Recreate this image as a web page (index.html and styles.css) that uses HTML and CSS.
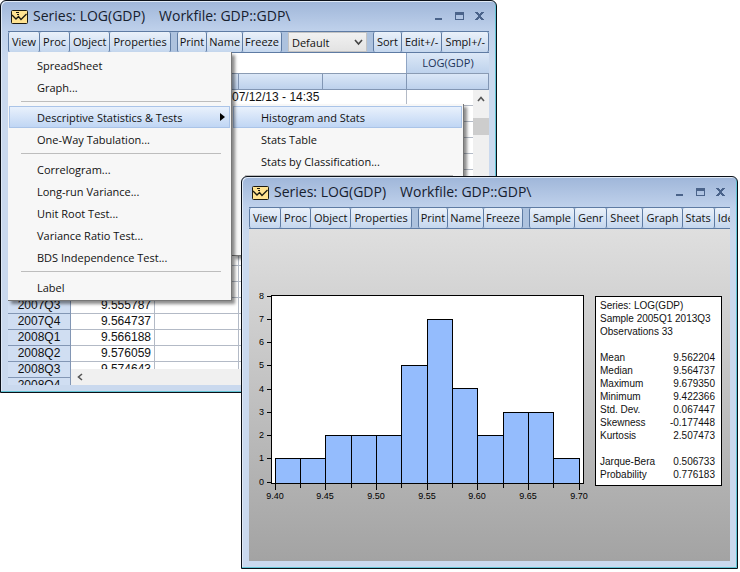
FILE: index.html
```html
<!DOCTYPE html>
<html lang="en">
<head>
<meta charset="utf-8">
<title>Series: LOG(GDP)</title>
<link rel="stylesheet" href="styles.css">
</head>
<body>
<main class="desktop">
  <section class="window window-sheet">
    <header class="titlebar">
      <svg class="app-icon" viewBox="0 0 18 15" aria-hidden="true"><rect x="1.5" y="1.5" width="16" height="13" rx="1" fill="#ffe391" stroke="#1c1a10"/><path d="M2 6l4 4 2.500-2.500L11 10.500l5.500-5.500" fill="none" stroke="#1c1a10" stroke-width="1.300"/><path d="M6 3.500h3M7 5.500h2" stroke="#1c1a10"/></svg>
      <h1 class="title"><span>Series: LOG(GDP)</span><span>Workfile: GDP::GDP\</span></h1>
      <div class="controls">
        <button type="button" aria-label="Minimize"><svg viewBox="0 0 10 10"><path d="M1 7h7v2h-7z"/></svg></button>
        <button type="button" aria-label="Maximize"><svg viewBox="0 0 10 10"><path fill-rule="evenodd" d="M1 1h9v8h-9zM2 4v4h7v-4z"/></svg></button>
        <button type="button" aria-label="Close"><svg viewBox="0 0 10 10"><path d="M1 1h3l1.500 2 1.500-2h3l-3 4 3 4h-3l-1.500-2-1.500 2h-3l3-4z"/></svg></button>
      </div>
    </header>
    <nav class="toolbar">
      <div class="group"><button type="button">View</button><button type="button">Proc</button><button type="button">Object</button><button type="button">Properties</button></div>
      <div class="group tight"><button type="button">Print</button><button type="button">Name</button><button type="button">Freeze</button></div>
      <div class="picker">
        <select aria-label="Display mode"><option>Default</option></select>
        <svg viewBox="0 0 9 7" aria-hidden="true"><path d="M1 1l3.500 4 3.500-4" fill="none" stroke="#444" stroke-width="1.600"/></svg>
      </div>
      <div class="group"><button type="button">Sort</button><button type="button">Edit+/-</button><button type="button">Smpl+/-</button></div>
    </nav>
    <div class="sheet">
      <div class="entry"><input type="text" aria-label="Cell value"><div class="series-name">LOG(GDP)</div></div>
      <div class="grid">
        <table>
          <colgroup><col class="col-label"><col class="col-data"><col class="col-data"><col class="col-data"><col class="col-data"><col></colgroup>
          <thead><tr><th></th><th></th><th></th><th></th><th></th><th></th></tr></thead>
          <tbody>
            <tr><th></th><td></td><td colspan="3" class="updated">07/12/13 - 14:35</td><td></td></tr>
            <tr><th></th><td></td><td></td><td></td><td></td><td></td></tr>
            <tr><th></th><td></td><td></td><td></td><td></td><td></td></tr>
            <tr><th></th><td></td><td></td><td></td><td></td><td></td></tr>
            <tr><th></th><td></td><td></td><td></td><td></td><td></td></tr>
            <tr><th></th><td></td><td></td><td></td><td></td><td></td></tr>
            <tr><th></th><td></td><td></td><td></td><td></td><td></td></tr>
            <tr><th></th><td></td><td></td><td></td><td></td><td></td></tr>
            <tr><th></th><td></td><td></td><td></td><td></td><td></td></tr>
            <tr><th></th><td></td><td></td><td></td><td></td><td></td></tr>
            <tr><th></th><td></td><td></td><td></td><td></td><td></td></tr>
            <tr><th></th><td></td><td></td><td></td><td></td><td></td></tr>
            <tr><th></th><td></td><td></td><td></td><td></td><td></td></tr>
            <tr><th>2007Q3</th><td>9.555787</td><td></td><td></td><td></td><td></td></tr>
            <tr><th>2007Q4</th><td>9.564737</td><td></td><td></td><td></td><td></td></tr>
            <tr><th>2008Q1</th><td>9.566188</td><td></td><td></td><td></td><td></td></tr>
            <tr><th>2008Q2</th><td>9.576059</td><td></td><td></td><td></td><td></td></tr>
            <tr><th>2008Q3</th><td>9.574643</td><td></td><td></td><td></td><td></td></tr>
            <tr><th>2008Q4</th><td></td><td></td><td></td><td></td><td></td></tr>
          </tbody>
        </table>
        <div class="scroll-v"><svg viewBox="0 0 8 6"><path d="M1 5l3-3.500 3 3.500" fill="none" stroke="#555" stroke-width="1.600"/></svg><div class="thumb"></div></div>
        <div class="scroll-h"><svg viewBox="0 0 6 8"><path d="M5 1l-3.500 3 3.500 3" fill="none" stroke="#555" stroke-width="1.600"/></svg></div>
      </div>
    </div>
    <div class="menu menu-view" role="menu">
      <button type="button" role="menuitem">SpreadSheet</button>
      <button type="button" role="menuitem">Graph...</button>
      <hr>
      <button type="button" role="menuitem" class="active">Descriptive Statistics &amp; Tests<svg viewBox="0 0 5 8" aria-hidden="true"><path d="M0 0l5 4-5 4z"/></svg></button>
      <button type="button" role="menuitem">One-Way Tabulation...</button>
      <hr>
      <button type="button" role="menuitem">Correlogram...</button>
      <button type="button" role="menuitem">Long-run Variance...</button>
      <button type="button" role="menuitem">Unit Root Test...</button>
      <button type="button" role="menuitem">Variance Ratio Test...</button>
      <button type="button" role="menuitem">BDS Independence Test...</button>
      <hr>
      <button type="button" role="menuitem">Label</button>
    </div>
    <div class="menu menu-sub" role="menu">
      <button type="button" role="menuitem" class="active">Histogram and Stats</button>
      <button type="button" role="menuitem">Stats Table</button>
      <button type="button" role="menuitem">Stats by Classification...</button>
      <hr>
    </div>
  </section>

  <section class="window window-graph">
    <header class="titlebar">
      <svg class="app-icon" viewBox="0 0 18 15" aria-hidden="true"><rect x="1.5" y="1.5" width="16" height="13" rx="1" fill="#ffe391" stroke="#1c1a10"/><path d="M2 6l4 4 2.500-2.500L11 10.500l5.500-5.500" fill="none" stroke="#1c1a10" stroke-width="1.300"/><path d="M6 3.500h3M7 5.500h2" stroke="#1c1a10"/></svg>
      <h2 class="title"><span>Series: LOG(GDP)</span><span>Workfile: GDP::GDP\</span></h2>
      <div class="controls">
        <button type="button" aria-label="Minimize"><svg viewBox="0 0 10 10"><path d="M1 7h7v2h-7z"/></svg></button>
        <button type="button" aria-label="Maximize"><svg viewBox="0 0 10 10"><path fill-rule="evenodd" d="M1 1h9v8h-9zM2 4v4h7v-4z"/></svg></button>
        <button type="button" aria-label="Close"><svg viewBox="0 0 10 10"><path d="M1 1h3l1.500 2 1.500-2h3l-3 4 3 4h-3l-1.500-2-1.500 2h-3l3-4z"/></svg></button>
      </div>
    </header>
    <nav class="toolbar">
      <div class="group"><button type="button">View</button><button type="button">Proc</button><button type="button">Object</button><button type="button">Properties</button></div>
      <div class="group tight"><button type="button">Print</button><button type="button">Name</button><button type="button">Freeze</button></div>
      <div class="group"><button type="button">Sample</button><button type="button">Genr</button><button type="button">Sheet</button><button type="button">Graph</button><button type="button">Stats</button><button type="button">Ident</button></div>
    </nav>
    <div class="graph">
      <svg class="histogram" viewBox="0 0 340 220" role="img" aria-label="Histogram of LOG(GDP)">
        <rect class="frame" x="22.5" y="10.5" width="312" height="188"/>
        <g class="bars">
          <rect x="26.5" y="173.500" width="25" height="25"/>
          <rect x="51.5" y="173.500" width="25" height="25"/>
          <rect x="76.500" y="150.500" width="26" height="48"/>
          <rect x="102.500" y="150.500" width="25" height="48"/>
          <rect x="127.500" y="150.500" width="25" height="48"/>
          <rect x="152.500" y="80.500" width="26" height="118"/>
          <rect x="178.500" y="34.500" width="25" height="164"/>
          <rect x="203.500" y="103.500" width="25" height="95"/>
          <rect x="228.500" y="150.500" width="26" height="48"/>
          <rect x="254.500" y="127.500" width="25" height="71"/>
          <rect x="279.500" y="127.500" width="25" height="71"/>
          <rect x="304.500" y="173.500" width="26" height="25"/>
        </g>
        <path class="ticks" d="M18 11.500h4M18 34.500h4M18 57.500h4M18 80.500h4M18 104.500h4M18 127.500h4M18 150.500h4M18 173.500h4M18 197.500h4M26.500 199v6M51.500 199v4M76.500 199v6M102.500 199v4M127.500 199v6M152.500 199v4M178.500 199v6M203.500 199v4M228.500 199v6M254.500 199v4M279.500 199v6M304.500 199v4M330.500 199v6"/>
        <g class="y-labels">
          <text x="15" y="14">8</text><text x="15" y="37">7</text><text x="15" y="60">6</text><text x="15" y="83">5</text><text x="15" y="107">4</text><text x="15" y="130">3</text><text x="15" y="153">2</text><text x="15" y="176">1</text><text x="15" y="200">0</text>
        </g>
        <g class="x-labels">
          <text x="26" y="214">9.40</text><text x="76" y="214">9.45</text><text x="127" y="214">9.50</text><text x="178" y="214">9.55</text><text x="228" y="214">9.60</text><text x="279" y="214">9.65</text><text x="330" y="214">9.70</text>
        </g>
      </svg>
      <div class="stats">
        <p>Series: LOG(GDP)</p>
        <p>Sample 2005Q1 2013Q3</p>
        <p>Observations 33</p>
        <table>
          <tbody>
            <tr><th>Mean</th><td>9.562204</td></tr>
            <tr><th>Median</th><td>9.564737</td></tr>
            <tr><th>Maximum</th><td>9.679350</td></tr>
            <tr><th>Minimum</th><td>9.422366</td></tr>
            <tr><th>Std. Dev.</th><td>0.067447</td></tr>
            <tr><th>Skewness</th><td>-0.177448</td></tr>
            <tr><th>Kurtosis</th><td>2.507473</td></tr>
          </tbody>
        </table>
        <table>
          <tbody>
            <tr><th>Jarque-Bera</th><td>0.506733</td></tr>
            <tr><th>Probability</th><td>0.776183</td></tr>
          </tbody>
        </table>
      </div>
    </div>
  </section>
</main>
</body>
</html>
```
FILE: styles.css
```css
* { box-sizing: border-box; }
body { margin: 0; background: #fff; color: #111; font-family: "Open Sans", "Noto Sans", sans-serif; font-size: 11px; }
button, input, select { font: inherit; color: inherit; margin: 0; }
.desktop { position: relative; height: 100vh; overflow: hidden; }

.window { position: absolute; display: flex; flex-direction: column; padding: 0 7px 7px; border: 1px solid #0b1018; border-radius: 6px 6px 0 0; background: linear-gradient(#9fb6d9, #bfd1eb 30px, #cad9ee 60px); box-shadow: inset -1px -1px #62c4d4, inset 1px 1px #dfe9f6; }
.window-sheet { top: 0; left: 0; right: 243px; bottom: 179px; }
.window-graph { top: 176px; left: 241px; right: 2px; bottom: 3px; }

.titlebar { display: flex; flex: none; align-items: center; height: 30px; padding-left: 2px; }
.app-icon { width: 18px; height: 15px; }
.title { display: flex; flex: 1; gap: 14px; margin: 0 0 0 5px; font-size: 14px; font-weight: 400; line-height: 20px; color: #16202f; white-space: nowrap; }
.controls { display: flex; }
.controls button { display: flex; align-items: center; justify-content: center; width: 20px; height: 20px; padding: 0; border: 0; background: none; }
.controls svg { width: 10px; height: 10px; fill: #4a638a; shape-rendering: crispEdges; }

.toolbar { display: flex; flex: none; gap: 6px; height: 22px; overflow: hidden; background: #adc2de; border-top: 1px solid #5e7ba3; border-bottom: 1px solid #5e7ba3; }
.group { display: flex; flex: none; }
.group button { padding: 0 3px; border: 1px solid #5e7ba3; border-width: 0 1px 0 0; border-radius: 2px; background: linear-gradient(#eaf1fa, #c5d7ee); line-height: 20px; white-space: nowrap; }
.group.tight button { padding: 0 2px; }
.group button:first-child { border-left-width: 1px; }
.picker { position: relative; flex: none; width: 79px; }
.picker select { width: 100%; height: 20px; padding: 0 3px; border: 1px solid #c4c4c4; border-radius: 0; background: linear-gradient(#f1f1f1, #e3e3e3); appearance: none; }
.picker svg { position: absolute; right: 4px; top: 7px; width: 9px; height: 7px; pointer-events: none; }

.sheet { display: flex; flex: 1; flex-direction: column; min-height: 0; background: #fff; }
.entry { display: flex; flex: none; height: 21px; border-bottom: 1px solid #8a9bb3; }
.entry input { flex: 1; min-width: 0; padding: 0 4px; border: 0; background: #fff; }
.series-name { width: 83px; border-left: 1px solid #8fa5c4; background: linear-gradient(#dce8f7, #bed2ec); color: #1c3358; line-height: 20px; text-align: center; }
.grid { position: relative; flex: 1; min-height: 0; overflow: hidden; font: 12px/15px "Liberation Sans", Arial, sans-serif; }
.grid table { width: 100%; border-collapse: separate; border-spacing: 0; table-layout: fixed; }
.col-label { width: 63px; }
.col-data { width: 84px; }
.grid th, .grid td { height: 16px; padding: 0 3px 0 0; border-right: 1px solid #b3bac6; border-bottom: 1px solid #b3bac6; font-weight: 400; text-align: right; white-space: nowrap; overflow: hidden; }
.grid th { padding: 0; border-color: #8296b4; background: #d0def2; text-align: center; }
.grid thead th { background: linear-gradient(#dbe7f7, #bdd1ec); }
.grid td.updated { padding-left: 77px; text-align: left; }
.scroll-v { position: absolute; top: 16px; right: 0; bottom: 16px; width: 16px; background: #f0f0f0; text-align: center; }
.scroll-v svg { display: block; width: 8px; height: 6px; margin: 6px auto 16px; }
.thumb { height: 17px; background: #cdcdcd; }
.scroll-h { position: absolute; left: 63px; right: 0; bottom: 0; height: 16px; padding: 4px 6px; background: #f0f0f0; }
.scroll-h svg { display: block; width: 6px; height: 8px; }

.menu { position: absolute; padding: 2px 1px; border: 1px solid #777; border-width: 0 1px 1px 0; background: #f7f7f7; box-shadow: 3px 3px 3px rgba(0, 0, 0, .45); }
.menu-view { top: 51px; left: 7px; width: 224px; z-index: 2; }
.menu-sub { top: 103px; left: 231px; width: 232px; height: 152px; }
.menu button { display: flex; align-items: center; justify-content: space-between; width: 100%; height: 22px; padding: 0 4px 0 27px; border: 1px solid transparent; background: none; text-align: left; white-space: nowrap; }
.menu button.active { border-color: #aac4e8; background: linear-gradient(#e9f1fc, #c0d6f4); background-clip: padding-box; }
.menu svg { width: 5px; height: 8px; }
.menu hr { height: 1px; margin: 3px 9px 4px 12px; border: 0; background: #bdbdbd; }

.graph { display: flex; flex: 1; align-items: flex-start; gap: 6px; min-height: 0; padding-top: 56px; background: linear-gradient(#dfdfdf, #a3a3a3); }
.histogram { flex: none; width: 340px; height: 220px; font: 9px "Liberation Sans", Arial, sans-serif; shape-rendering: crispEdges; }
.frame { fill: #fff; stroke: #000; }
.bars { fill: #94bcfd; stroke: #000; }
.ticks { stroke: #000; }
.y-labels { text-anchor: end; }
.x-labels { text-anchor: middle; }
.stats { flex: none; width: 127px; margin-top: 11px; padding: 2px 6px 4px 4px; border: 1px solid #000; background: #fff; font: 10px/13px "Liberation Sans", Arial, sans-serif; white-space: nowrap; }
.stats p { margin: 0; }
.stats table { width: 100%; margin-top: 13px; border-collapse: collapse; }
.stats th { padding: 0; font-weight: 400; text-align: left; }
.stats td { padding: 0; text-align: right; }
```
